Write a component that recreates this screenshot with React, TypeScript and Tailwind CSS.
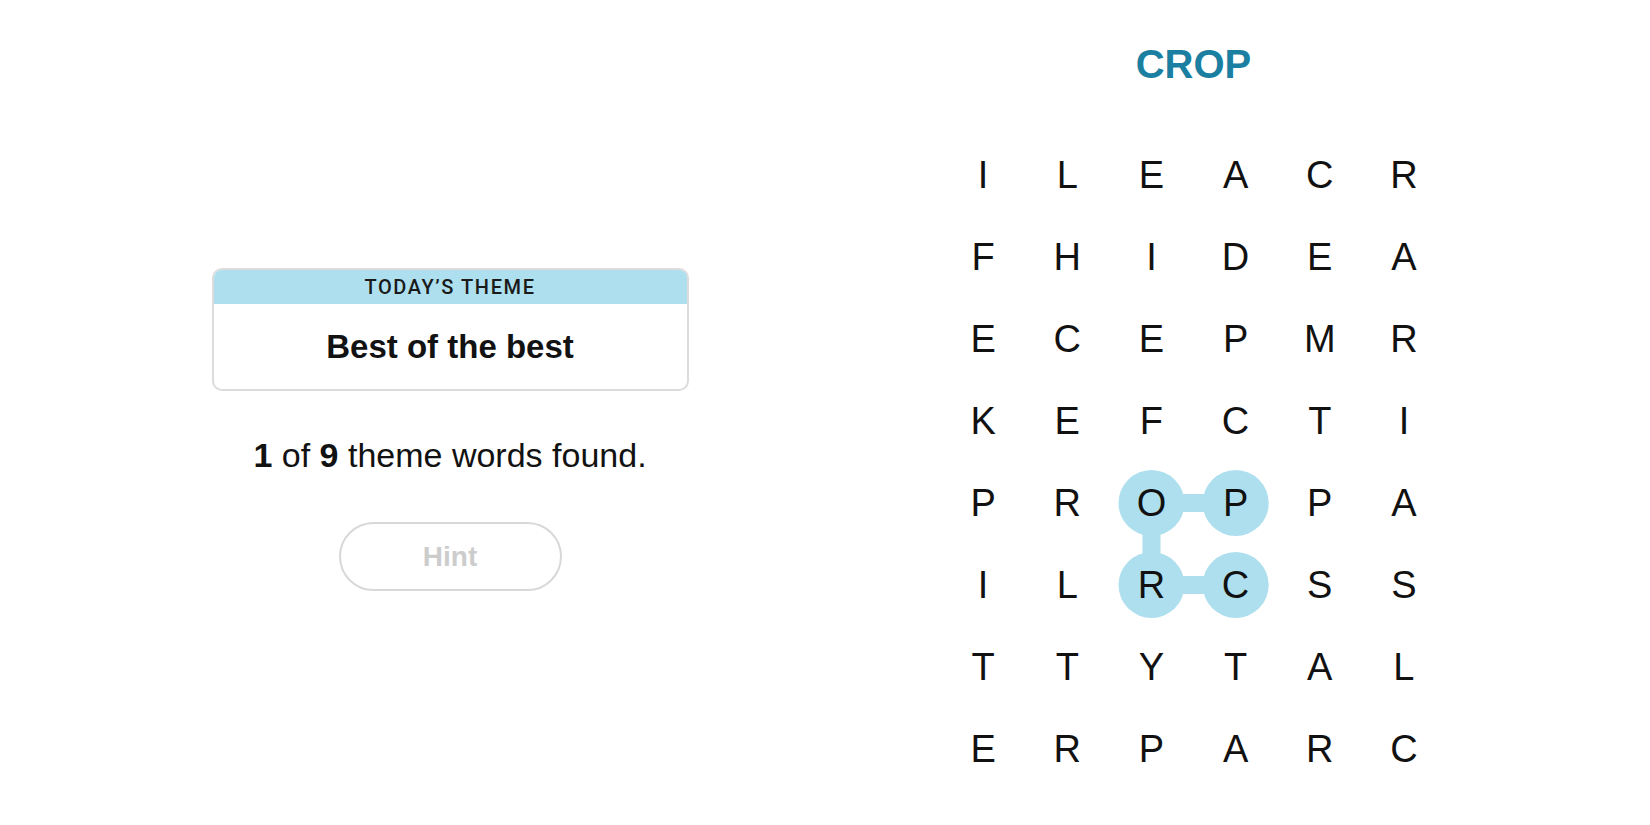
import React from 'react';

const rows = [
  'ILEACR',
  'FHIDEA',
  'ECEPMR',
  'KEFCTI',
  'PROPPA',
  'ILRCSS',
  'TTYTAL',
  'ERPARC',
];

// found word path, as [row, col]
const found: [number, number][] = [
  [4, 3],
  [4, 2],
  [5, 2],
  [5, 3],
];

const CELL_W = 84.2;
const CELL_H = 82;

const font = { fontFamily: '"Liberation Sans", Arial, sans-serif' };

const ThemeCard: React.FC = () => (
  <div className="w-[477px] h-[123px] rounded-[10px] border-2 border-[#dcdcdc] overflow-hidden flex flex-col">
    <div className="h-[34px] bg-[#aedfee] flex items-center justify-center text-[20px] font-medium tracking-[1.6px] text-[#1a1a1a] font-[Roboto,_'Liberation_Sans',_sans-serif]">
      TODAY’S THEME
    </div>
    <div className="flex-1 flex items-center justify-center text-[33px] font-bold text-[#121212]">
      Best of the best
    </div>
  </div>
);

const Board: React.FC = () => {
  const cx = (c: number) => c * CELL_W + CELL_W / 2;
  const cy = (r: number) => r * CELL_H + CELL_H / 2;

  return (
    <div className="relative w-[505px] h-[656px]">
      <svg className="absolute inset-0" width={505} height={656}>
        {found.slice(1).map(([r, c], i) => {
          const [pr, pc] = found[i];
          return (
            <line
              key={i}
              x1={cx(pc)}
              y1={cy(pr)}
              x2={cx(c)}
              y2={cy(r)}
              stroke="#aedfee"
              strokeWidth={18}
            />
          );
        })}
        {found.map(([r, c]) => (
          <circle key={`${r}-${c}`} cx={cx(c)} cy={cy(r)} r={33} fill="#aedfee" />
        ))}
      </svg>
      <div className="relative grid grid-cols-6">
        {rows.map((row, r) =>
          row.split('').map((ch, c) => (
            <div
              key={`${r}-${c}`}
              className="w-[84.2px] h-[82px] flex items-center justify-center text-[38px] text-[#111]"
            >
              {ch}
            </div>
          ))
        )}
      </div>
    </div>
  );
};

export default function App() {
  return (
    <div className="w-[1650px] h-[825px] bg-white flex" style={font}>
      <div className="w-[900px] flex flex-col items-center pt-[268px]">
        <ThemeCard />
        <p className="mt-[44px] text-[34px] leading-[40px] text-[#121212]">
          <span className="font-bold">1</span> of <span className="font-bold">9</span> theme words found.
        </p>
        <button className="mt-[47px] w-[223px] h-[69px] rounded-full border-2 border-[#d8d8d8] text-[28px] font-bold text-[#cccccc] bg-white">
          Hint
        </button>
      </div>
      <div className="w-[587px] flex flex-col items-center pt-[40px]">
        <h1 className="text-[40px] leading-[48px] font-bold text-[#1b7fa2]">CROP</h1>
        <div className="mt-[46px]">
          <Board />
        </div>
      </div>
    </div>
  );
}
